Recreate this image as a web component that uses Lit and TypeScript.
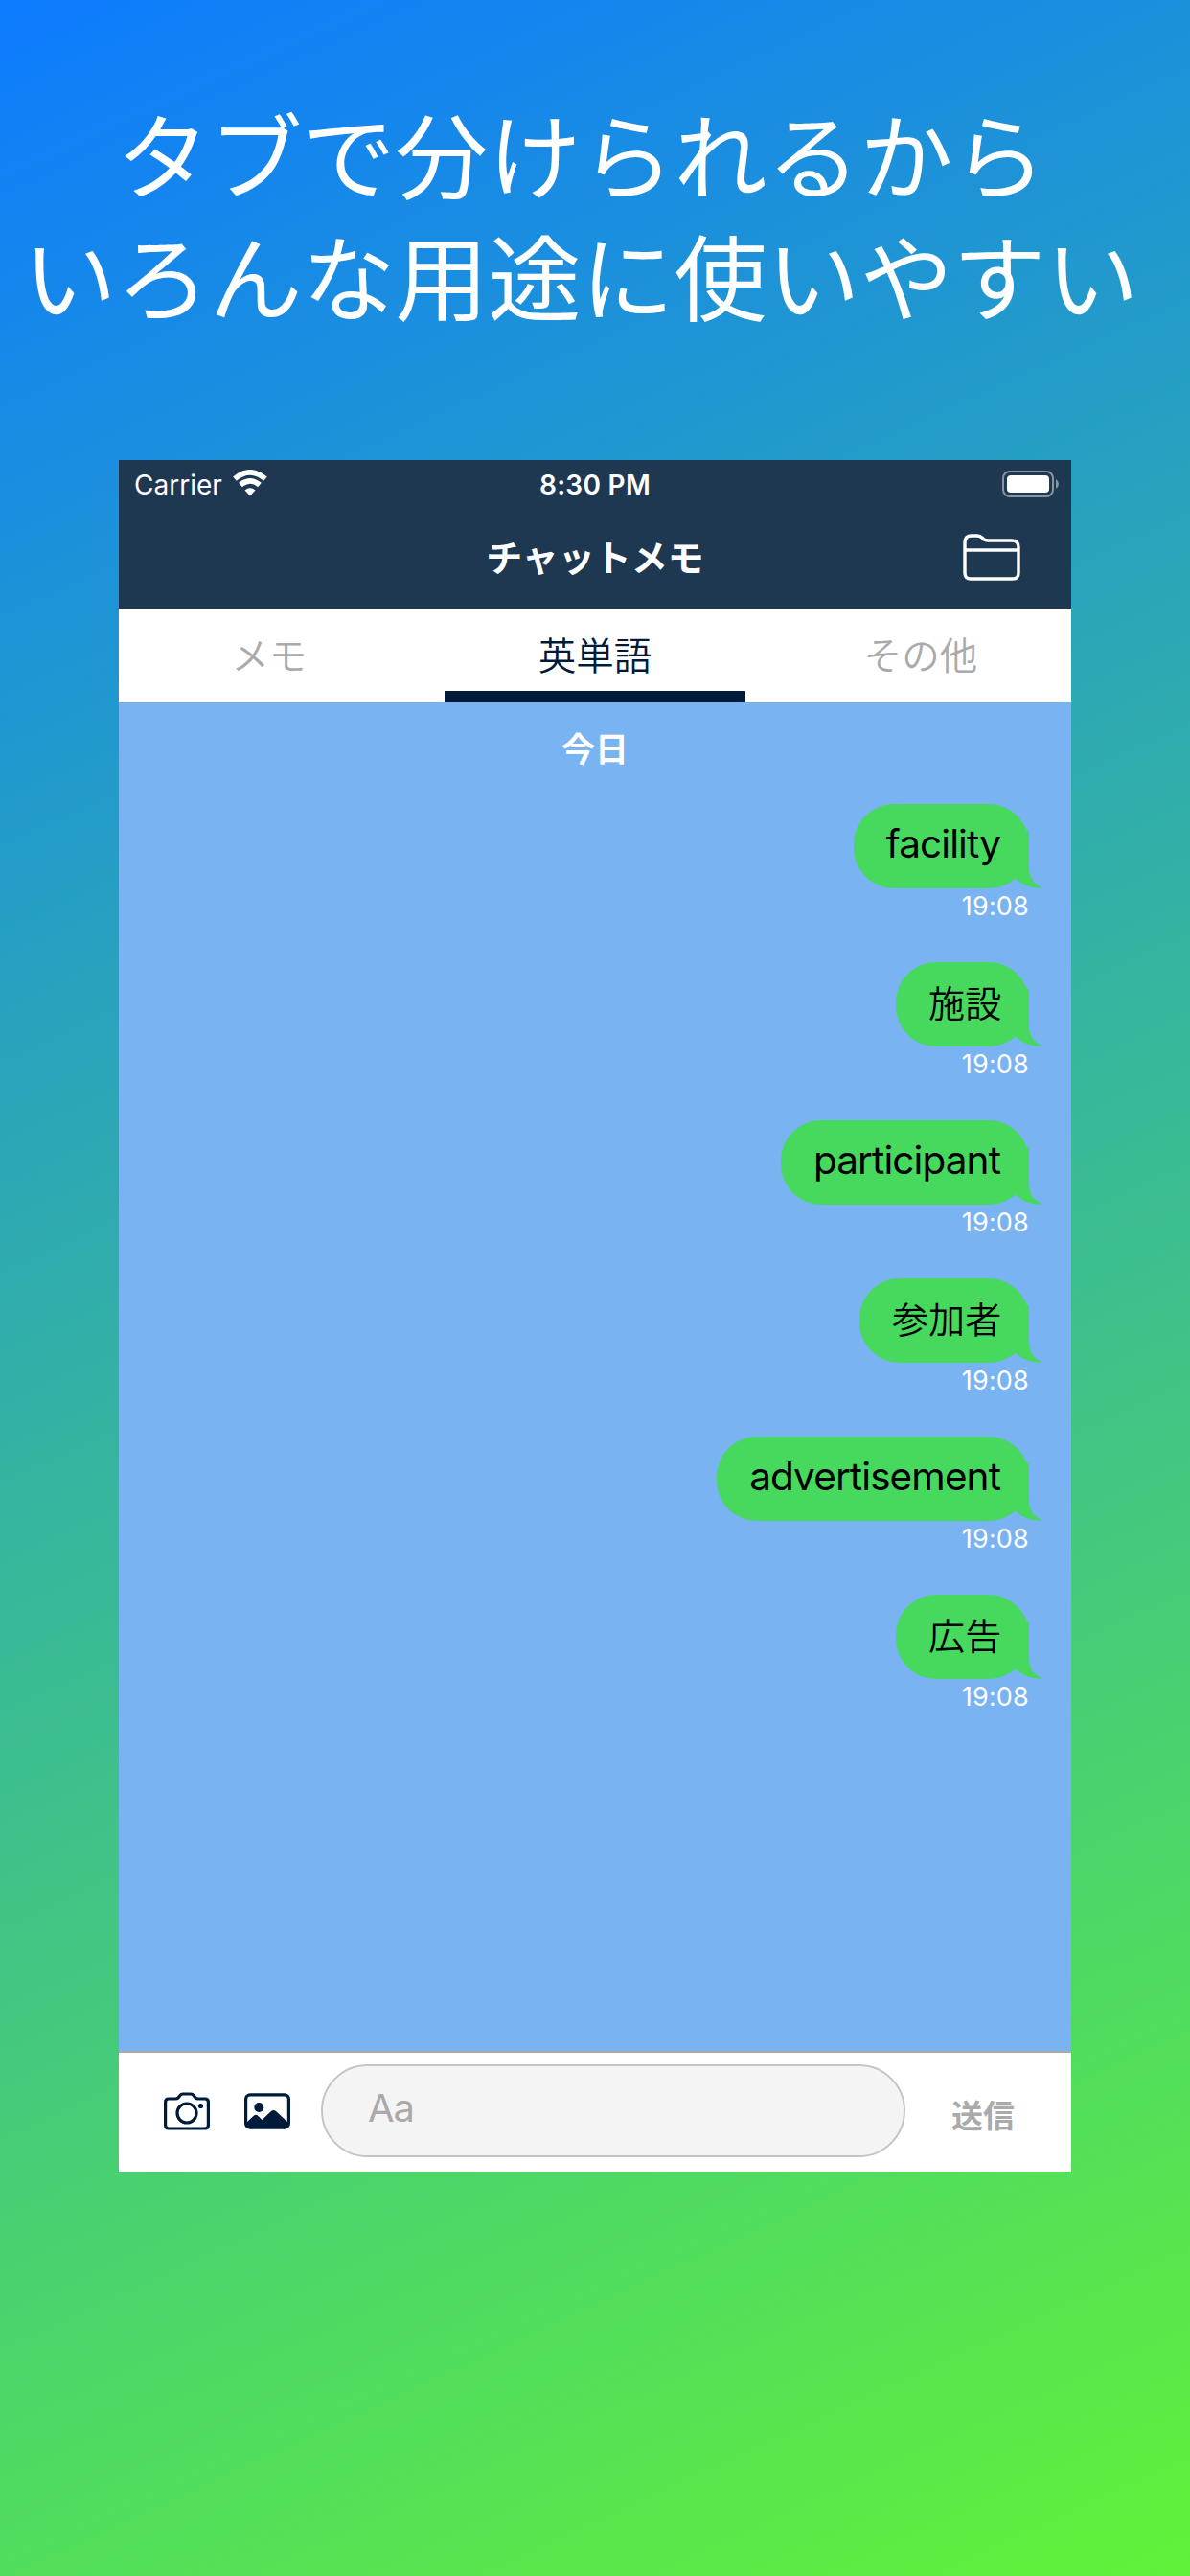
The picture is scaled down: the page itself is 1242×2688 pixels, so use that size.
import { LitElement, html, css, svg } from "lit";
import { customElement, property } from "lit/decorators.js";
import { classMap } from "lit/directives/class-map.js";

@customElement("chat-bubble")
class ChatBubble extends LitElement {
  @property() text = "";
  @property() time = "";

  static styles = css`
    :host { display: flex; flex-direction: column; align-items: flex-end; height: 165px; }
    .bubble {
      position: relative; display: flex; align-items: center; height: 88px; box-sizing: border-box;
      padding: 0 30px 5px 34px; border-radius: 42px; background: #47d85e; color: #000;
      font-size: 40.5px; letter-spacing: -0.9px; white-space: nowrap;
    }
    .bubble.cjk { font-size: 38px; font-weight: 350; letter-spacing: 0.2px; padding: 0 28.5px 8px 34px; }
    .tail { position: absolute; right: -15px; bottom: 0; width: 60px; height: 60px; }
    .time { margin-top: 5px; color: #fff; font-size: 27px; line-height: 28px; letter-spacing: 0.2px; }
  `;

  render() {
    const cjk = !/^[\x00-\x7f]*$/.test(this.text);
    return html`
      <div class=${classMap({ bubble: true, cjk })}>
        <svg class="tail" viewBox="0 0 60 60">
          <path fill="#47d85e" d="M20 0 H45 V38 Q45 55 60 59.4 Q43 61 31 50 L20 40Z"/>
        </svg>
        <span>${this.text}</span>
      </div>
      <div class="time">${this.time}</div>
    `;
  }
}

const wifi = svg`
  <g fill="none" stroke="#fff" stroke-width="5.6">
    <path d="M2 9.7 Q18 -4 34 9.7"/>
    <path d="M8 16 Q18 7.6 28 16"/>
  </g>
  <path fill="#fff" d="M12.5 21.5 Q18 17.2 23.5 21.5 L18 27.5Z"/>
`;

@customElement("app-root")
class AppRoot extends LitElement {
  private tabs = ["メモ", "英単語", "その他"];
  private messages = ["facility", "施設", "participant", "参加者", "advertisement", "広告"];

  static styles = css`
    :host {
      display: flex; flex-direction: column; width: 1242px; height: 2688px; box-sizing: border-box;
      padding: 94px 0 0; overflow: hidden;
      font-family: Inter, "Noto Sans CJK JP", sans-serif;
      background: linear-gradient(155.2deg, #0d7bff 0%, #60f239 100%);
    }
    .headline {
      margin: 0; height: 386px; padding-right: 29px; color: #fff; font-family: "Noto Sans CJK JP", sans-serif;
      font-weight: 400; font-size: 97px; line-height: 127px; text-align: center; white-space: nowrap;
    }
    .headline span { display: block; }
    .phone { display: flex; flex-direction: column; width: 994px; height: 1786px; margin-left: 124px; background: #fff; }
    .top { height: 155px; background: #1f3851; color: #fff; }
    .status { display: grid; grid-template-columns: 1fr auto 1fr; align-items: center; height: 52px; font-size: 28px; }
    .carrier { display: flex; align-items: center; gap: 11px; padding-left: 16px; }
    .wifi { width: 36px; height: 28px; margin-top: -4px; }
    .clock { font-weight: 600; font-size: 28px; letter-spacing: 0.3px; }
    .battery { justify-self: end; width: 60px; height: 28px; margin: -3px 12px 0 0; }
    .bar { display: grid; grid-template-columns: 1fr auto 1fr; align-items: center; height: 103px; }
    .title { grid-column: 2; font-weight: 700; font-size: 38px; line-height: 56px; margin-top: -4px; }
    .folder { justify-self: end; width: 60px; height: 49px; margin: -4px 53px 0 0; }
    .tabs { display: grid; grid-template-columns: 314px 366px 314px; height: 98px; }
    .tab {
      display: flex; justify-content: center; align-items: center; box-sizing: border-box;
      font-size: 39.5px; font-weight: 350; color: #aaa; padding-bottom: 6px;
      border-bottom: 0 solid #001b3a;
    }
    .tab.active { margin: 0 26px 0 26px; border-bottom-width: 12px; padding: 6px 0 0; color: #001b3a; }
    .chat { height: 1407px; box-sizing: border-box; padding: 26px 44px 0 0; background: #79b3f1; }
    .day { height: 80px; padding-left: 44px; color: #fff; font-size: 35px; font-weight: 700; line-height: 46px; text-align: center; }
    .composer {
      display: flex; align-items: center; height: 126px; box-sizing: border-box;
      border-top: 2px solid #aaa; padding: 0 0 3px 47px; background: #fff;
    }
    .icon { width: 48px; height: 40px; }
    .camera { margin-right: 36px; }
    .field {
      display: flex; align-items: center; width: 610px; height: 97px; box-sizing: border-box;
      margin-left: 32px; padding: 0 0 7px 47px; border: 2px solid #c5c5c5; border-radius: 49px;
      background: #f4f4f4; color: #aaa; font-size: 40px; letter-spacing: -1px;
    }
    .send { margin: 10px 0 0 48px; color: #aaa; font-size: 33px; font-weight: 700; line-height: 48px; }
  `;

  render() {
    return html`
      <h1 class="headline"><span>タブで分けられるから</span><span>いろんな用途に使いやすい</span></h1>
      <main class="phone">
        <header class="top">
          <div class="status">
            <div class="carrier"><span>Carrier</span><svg class="wifi" viewBox="0 0 36 28">${wifi}</svg></div>
            <span class="clock">8:30 PM</span>
            <svg class="battery" viewBox="0 0 60 28">
              <rect x="1" y="1" width="52" height="26" rx="7" fill="none" stroke="#8795a2" stroke-width="2"/>
              <rect x="5" y="5" width="44" height="18" rx="4" fill="#fff"/>
              <path d="M56 9 Q59 11 59 14 Q59 17 56 19Z" fill="#8795a2"/>
            </svg>
          </div>
          <div class="bar">
            <span class="title">チャットメモ</span>
            <svg class="folder" viewBox="0 0 60 49" fill="none" stroke="#fff" stroke-width="3.4">
              <path d="M2 9 Q2 2 9 2 H15 Q18 2 20 4 L22 6 Q24 7 27 7 H51 Q58 7 58 14 V41 Q58 47 52 47 H8 Q2 47 2 41Z"/>
              <path d="M2 17 H58"/>
            </svg>
          </div>
        </header>
        <nav class="tabs">
          ${this.tabs.map((t, i) => html`<div class=${classMap({ tab: true, active: i === 1 })}>${t}</div>`)}
        </nav>
        <section class="chat">
          <div class="day">今日</div>
          ${this.messages.map((m) => html`<chat-bubble .text=${m} time="19:08"></chat-bubble>`)}
        </section>
        <footer class="composer">
          <svg class="icon camera" viewBox="0 0 48 40" fill="none" stroke="#001b3a" stroke-width="3.2" stroke-linejoin="round">
            <path d="M5 7 H12 Q14 7 15 6 L17 3.5 Q18 2 20 2 H28 Q30 2 31 3.5 L33 6 Q34 7 36 7 H43 Q46.4 7 46.4 10.5 V34.5 Q46.4 38 43 38 H5 Q1.6 38 1.6 34.5 V10.5 Q1.6 7 5 7Z"/>
            <circle cx="24" cy="22" r="10"/>
            <circle cx="38.5" cy="14.5" r="2.6" fill="#001b3a" stroke="none"/>
          </svg>
          <svg class="icon" viewBox="0 0 48 40">
            <rect x="1.6" y="2.8" width="44.8" height="34.4" rx="4.5" fill="none" stroke="#001b3a" stroke-width="3.2"/>
            <circle cx="15.3" cy="16" r="5" fill="#001b3a"/>
            <path d="M2 32 L10 24.5 Q12 23 14 24.5 L18.5 29 L28 20 Q30.5 18 33 20 L46 32 V34 Q46 38 42 38 H6 Q2 38 2 34Z" fill="#001b3a"/>
          </svg>
          <div class="field">Aa</div>
          <div class="send">送信</div>
        </footer>
      </main>
    `;
  }
}
